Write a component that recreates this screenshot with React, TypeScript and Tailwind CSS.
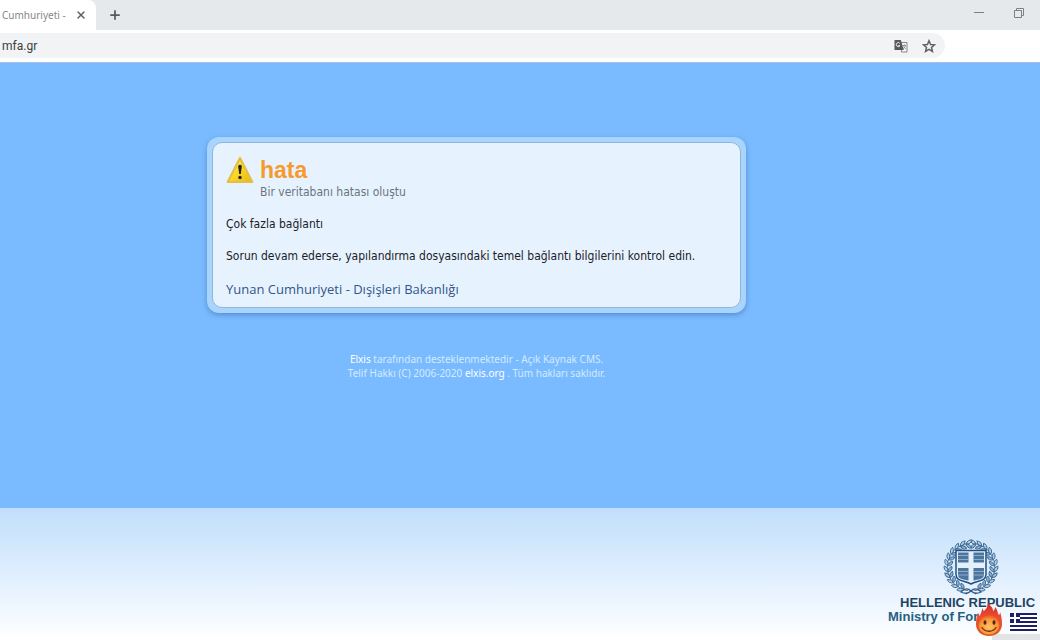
import type { ReactNode } from "react";
import { Plus, X } from "lucide-react";

const sans = "font-['Noto_Sans','Open_Sans',sans-serif]";
const narrow = "font-['Roboto','Noto_Sans',sans-serif]";
const body = "font-['DejaVu_Sans_Condensed','Noto_Sans',sans-serif]";

function TranslateIcon() {
  return (
    <svg viewBox="0 0 14 14" className="h-3.5 w-3.5" aria-hidden="true">
      <path d="M6.500 3.500h6.500v9.500H7.500z" fill="#f5f6f7" stroke="#85888b" />
      <path d="M.5 1h6.300l3 10H.5z" fill="#55595e" />
      <path d="M5.800 4.300a2 2 0 1 0 .2 2.300H4.300" fill="none" stroke="#fff" strokeWidth=".9" />
      <path d="M8.500 6.500h3.500M10.300 5.500v1M11.500 6.500c-.3 1.500-1.300 2.500-2.300 3M9.500 7.500c.5 1 1.300 1.700 2.200 2.200" fill="none" stroke="#77797c" strokeWidth=".8" />
    </svg>
  );
}

function BrowserBar() {
  return (
    <header className="border-b border-[#a9bddd] bg-white">
      <div className="flex h-[30px] items-stretch bg-[#e5e9ec]">
        <div className="flex w-24 items-center justify-between rounded-tr-lg bg-white pr-2 pl-0.5">
          <span className={`text-[10px] whitespace-nowrap text-[#85888c] ${sans}`}>Cumhuriyeti -</span>
          <button type="button" aria-label="Close tab" className="p-px text-[#5f6368]">
            <X size={12} strokeWidth={3} />
          </button>
        </div>
        <button type="button" aria-label="New tab" className="px-3 text-[#55595d]">
          <Plus size={14} strokeWidth={3} />
        </button>
        <div className="ml-auto flex items-start gap-[30px] pt-2 pr-4 text-[#7d8185]">
          <button type="button" aria-label="Minimize">
            <svg viewBox="0 0 10 10" className="h-2.5 w-2.5">
              <path d="M0 4.500h10" stroke="currentColor" />
            </svg>
          </button>
          <button type="button" aria-label="Restore">
            <svg viewBox="0 0 10 10" className="h-2.5 w-2.5" fill="none" stroke="currentColor">
              <path d="M.5 2.500h7v7h-7zM2.500 2.500v-2h7v7h-2" />
            </svg>
          </button>
        </div>
      </div>
      <div className="pt-[3px] pr-[95px] pb-1">
        <div className="flex h-[25px] items-center rounded-r-full bg-[#f1f3f4] pr-[9px] pl-0.5">
          <input
            aria-label="Address"
            defaultValue="mfa.gr"
            className={`min-w-0 flex-1 bg-transparent text-xs text-[#3c4043] outline-none ${narrow}`}
          />
          <div className="flex items-center gap-3.5">
            <button type="button" aria-label="Translate">
              <TranslateIcon />
            </button>
            <button type="button" aria-label="Bookmark" className="text-[#5f6368]">
              <svg viewBox="0 0 24 24" className="h-3.5 w-3.5" fill="none" stroke="currentColor" strokeWidth="2.600">
                <path d="m12 3 2.700 6.400 6.800.6-5.200 4.500 1.600 6.700-5.900-3.600-5.900 3.600 1.600-6.700L2.500 10l6.800-.6z" />
              </svg>
            </button>
          </div>
        </div>
      </div>
    </header>
  );
}

function WarningIcon() {
  return (
    <svg viewBox="0 0 28 28" className="h-7 w-7" aria-hidden="true">
      <defs>
        <linearGradient id="warn" x1="0" y1="0" x2="1" y2="1">
          <stop offset="0" stopColor="#fff06a" />
          <stop offset=".55" stopColor="#f9d423" />
          <stop offset="1" stopColor="#e9b512" />
        </linearGradient>
      </defs>
      <path d="M14 2 26.300 26h-24.600z" fill="url(#warn)" stroke="#e3bf45" strokeWidth="2.200" strokeLinejoin="round" />
      <path d="M12.200 10.500a1.800 1.800 0 0 1 3.600 0l-1 7.500h-1.600z" fill="#222" />
      <circle cx="14" cy="21.500" r="1.700" fill="#222" />
    </svg>
  );
}

function ErrorCard({ children }: { children: ReactNode }) {
  return (
    <section className="w-full max-w-[539px] rounded-xl bg-[#a9d4fd] p-[5px] shadow-[0_2px_5px_rgba(40,90,150,0.45)]">
      <div className="rounded-[10px] border border-[#8fb7dc] bg-[#e6f3ff] px-[13px] pt-[13px] pb-[9px]">
        {children}
      </div>
    </section>
  );
}

const leaves = Array.from({ length: 11 }, (_, i) => 12 + i * 15);

function Emblem() {
  const branch = leaves.map((a) => (
    <g key={a} transform={`rotate(${a} 28 28)`} stroke="#3a6690" strokeWidth=".9">
      <path d="M28 4.500c-1.500-3-4.500-3.500-6.500-2.500 1.500 2.500 4 3.500 6.500 2.500Z" fill="#b5cfe6" />
      <path d="M28 4.500c-2 .5-4.500 2-4.500 5 3 0 4.500-2 4.500-5Z" fill="#8fb0cf" />
      <path d="M28 4.500c1.500-.5 3-.5 4.500.8" fill="none" />
    </g>
  ));
  return (
    <svg viewBox="0 0 56 56" className="h-14 w-14" fill="none" aria-hidden="true">
      {branch}
      <g transform="matrix(-1 0 0 1 56 0)">{branch}</g>
      <path d="M18 53c4-4 7-4 10-1 3-3 6-3 10 1-4 2-7 2-10-1-3 3-6 3-10 1ZM28 52l-5 3M28 52l5 3" stroke="#2f5c87" strokeWidth="1.300" />
      <path d="M13 11.500h30v24c0 7-9 6-15 9.500-6-3.500-15-2.500-15-9.500z" fill="#e4f1fd" stroke="#23507e" strokeWidth="1.500" />
      <path d="M15 13.500h10.500v10H15zM30.500 13.500H41v10H30.500zM15 29h10.500v12.500C21 40.500 15 40 15 36zM30.500 29H41v7c0 4-6 4.500-10.500 5.500z" fill="#4b759d" />
      <path d="M15 16.500h10.500M15 20.500h10.500M30.500 16.500H41M30.500 20.500H41M15 32.500h10.500M15 36h10.500M30.500 32.500H41M30.500 36H41" stroke="#9dbbd6" strokeWidth=".8" />
    </svg>
  );
}

function Flame() {
  return (
    <svg viewBox="0 0 26 34" className="h-[34px] w-[26px]" aria-hidden="true">
      <defs>
        <linearGradient id="fire" x1="0" y1="0" x2="0" y2="1">
          <stop offset="0" stopColor="#cf2a2b" />
          <stop offset=".45" stopColor="#ee4d31" />
          <stop offset="1" stopColor="#d95722" />
        </linearGradient>
        <radialGradient id="face" cx=".5" cy=".6" r=".55">
          <stop offset="0" stopColor="#ffc465" />
          <stop offset=".75" stopColor="#fa9634" />
          <stop offset="1" stopColor="#ec6929" />
        </radialGradient>
      </defs>
      <path d="M12 0c1 4 5 4 5 9 2-1 2-3 2-4 3 3 2 5 4 8 1-1 1-2 1-3 2 6 2 9 2 12 0 7-5 12-13 12S0 29 0 22c0-5 1-8 2-11 1 1 1 2 1 3C6 11 5 9 7 6c0 2 0 2 1 3 3-3 4-5 4-9Z" fill="url(#fire)" />
      <ellipse cx="13" cy="23" rx="10.500" ry="9.500" fill="url(#face)" />
      <ellipse cx="9" cy="20.500" rx="1.500" ry="2.200" fill="#572414" />
      <ellipse cx="18" cy="20.500" rx="1.500" ry="2.200" fill="#572414" />
      <path d="M6 25.500c3 5 11 5 14 0" fill="none" stroke="#6c2c16" strokeWidth="1.300" strokeLinecap="round" />
    </svg>
  );
}

function GreekFlag() {
  return (
    <svg viewBox="0 0 27 18" className="h-[18px] w-[27px]" aria-label="Ελληνικά">
      <path d="M0 0h27v18H0z" fill="#fff" />
      <path d="M0 1h27M0 5h27M0 9h27M0 13h27M0 17h27" stroke="#1b2166" strokeWidth="2" />
      <path d="M0 0h10v10H0z" fill="#1b2166" />
      <path d="M5 0v10M0 5h10" stroke="#fff" strokeWidth="2" />
    </svg>
  );
}

export default function App() {
  return (
    <div className="flex min-h-screen flex-col overflow-hidden bg-[#7abaff]">
      <BrowserBar />
      <main className={`flex flex-1 flex-col items-center pt-[74px] pr-[87px] ${body}`}>
        <ErrorCard>
          <div className="flex gap-1.5">
            <WarningIcon />
            <div>
              <h1 className="font-['Liberation_Sans',Arial,sans-serif] text-[23px]/7 font-bold text-[#f79a2e]">
                hata
              </h1>
              <p className="text-xs/4 text-[#6c747c]">Bir veritabanı hatası oluştu</p>
            </div>
          </div>
          <p className="mt-4 text-xs/4 text-[#1d2125]">Çok fazla bağlantı</p>
          <p className="mt-4 text-xs/4 text-[#1d2125]">
            Sorun devam ederse, yapılandırma dosyasındaki temel bağlantı bilgilerini kontrol edin.
          </p>
          <p className="mt-4 font-['Open_Sans','Noto_Sans',sans-serif] text-[13px]/[18px] text-[#35548a]">
            <a href="#home">Yunan Cumhuriyeti - Dışişleri Bakanlığı</a>
          </p>
        </ErrorCard>
        <div className={`mt-[39px] text-center text-[10px]/[14px] text-[#d3ebff] ${sans}`}>
          <p>
            <a href="#elxis" className="text-white">Elxis</a> tarafından desteklenmektedir - Açık Kaynak CMS.
          </p>
          <p>
            Telif Hakkı (C) 2006-2020 <a href="#elxis" className="text-white">elxis.org</a> . Tüm hakları saklıdır.
          </p>
        </div>
      </main>
      <footer className="relative flex h-[132px] items-end justify-end overflow-hidden bg-linear-to-b from-[#c1dffb] via-[#dfeefe] to-white">
        <div className="w-[152px] pb-4 font-['Liberation_Sans',Arial,sans-serif] text-[13px]/[14px] font-bold whitespace-nowrap">
          <div className="pb-px pl-[55px]">
            <Emblem />
          </div>
          <p className="pl-3 text-[#1f4463]">HELLENIC REPUBLIC</p>
          <p className="text-[#25607f]">Ministry of For</p>
        </div>
        <div className="absolute right-0 bottom-0 h-1.5 w-12 bg-[#e3e4e6]" />
        <div className="absolute right-[3px] bottom-1 flex items-end gap-2">
          <Flame />
          <a href="#el" className="pb-[5px]">
            <GreekFlag />
          </a>
        </div>
      </footer>
    </div>
  );
}
